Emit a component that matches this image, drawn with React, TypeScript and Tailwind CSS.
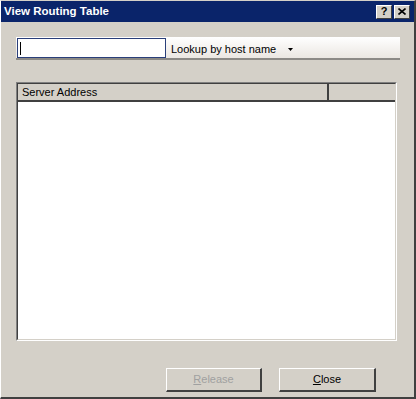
export default function App() {
  const font = { fontFamily: '"Liberation Sans", Arial, sans-serif' };
  return (
    <div
      className="w-[416px] h-[399px] bg-[#d4d0c8] border-l border-t border-l-[#ffffff] border-t-[#d4d0c8] border-r-2 border-b-2 border-r-[#404040] border-b-[#404040] flex flex-col text-[11px] text-black overflow-hidden"
      style={font}
    >
      {/* title bar */}
      <div className="h-[21px] bg-[#0a246a] flex items-center pl-[3px] pr-[4px] shrink-0">
        <span className="text-white font-bold text-[11.5px]">View Routing Table</span>
        <div className="ml-auto flex gap-[2px]">
          <div className="w-[16px] h-[14px] bg-[#d4d0c8] border-t border-l border-white border-r border-b border-r-[#404040] border-b-[#404040] flex items-center justify-center font-bold text-[11px] leading-none">?</div>
          <div className="w-[16px] h-[14px] bg-[#d4d0c8] border-t border-l border-white border-r border-b border-r-[#404040] border-b-[#404040] flex items-center justify-center">
            <svg width="8" height="7" viewBox="0 0 8 7">
              <path d="M0.5 0.5 L7.5 6.5 M7.5 0.5 L0.5 6.5" stroke="#000" strokeWidth="1.6" />
            </svg>
          </div>
        </div>
      </div>

      <div className="flex-1 flex flex-col pl-[15px]">
        {/* lookup strip */}
        <div className="mt-[15px] w-[384px] h-[23px] bg-gradient-to-b from-[#ffffff] to-[#ebe7e2] border-b-2 border-[#8c8a86] flex items-start">
          <div className="ml-[1px] mt-[1px] w-[149px] h-[20px] bg-white border border-[#2a3f7a] flex items-center pl-[2px]">
            <div className="w-px h-[13px] bg-black" />
          </div>
          <div className="ml-[5px] mt-[4px] flex items-center">
            <span>Lookup by host name</span>
            <svg className="ml-[12px]" width="5" height="3" viewBox="0 0 5 3">
              <path d="M0 0 H5 L2.5 3 Z" fill="#000" />
            </svg>
          </div>
        </div>

        {/* list view */}
        <div className="mt-[22px] w-[381px] h-[259px] border-t border-l border-[#808080] border-r border-b border-r-[#ffffff] border-b-[#ffffff] flex">
          <div className="flex-1 border-t border-l border-[#404040] border-r border-b border-r-[#d4d0c8] border-b-[#d4d0c8] bg-white flex flex-col">
            <div className="h-[18px] flex bg-[#d4d0c8] shrink-0 border-b-2 border-[#404040]">
              <div className="w-[311px] border-r-2 border-[#404040] pl-[4px] flex items-center">Server Address</div>
              <div className="flex-1" />
            </div>
            <div className="flex-1 bg-white" />
          </div>
        </div>

        {/* buttons */}
        <div className="mt-[27px] flex pl-[150px] gap-[17px]">
          <div className="w-[96px] h-[24px] border-t border-l border-white border-r-2 border-b-2 border-r-[#404040] border-b-[#404040] flex items-center justify-center text-[#a0a0a0]">
            <span><u>R</u>elease</span>
          </div>
          <div className="w-[97px] h-[24px] border-t border-l border-white border-r-2 border-b-2 border-r-[#404040] border-b-[#404040] flex items-center justify-center">
            <span><u>C</u>lose</span>
          </div>
        </div>
      </div>
    </div>
  );
}
